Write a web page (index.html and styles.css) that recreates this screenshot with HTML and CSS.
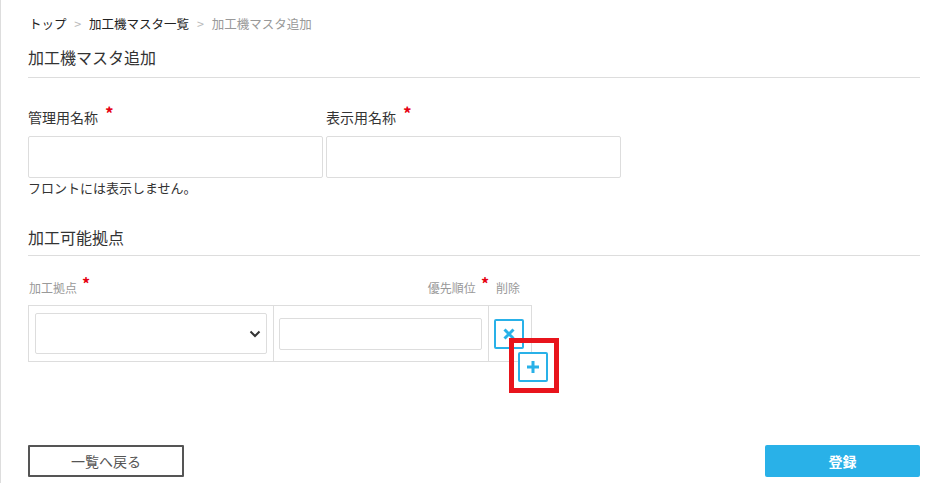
FILE: index.html
```html
<!DOCTYPE html>
<html lang="ja">
<head>
    <meta charset="UTF-8">
    <meta name="viewport" content="width=device-width, initial-scale=1.0">
    <title>加工機マスタ追加</title>
    <link rel="stylesheet" href="styles.css">
</head>
<body>
    <div class="page">
        <!-- パンくず -->
        <nav class="breadcrumb">
            <a href="#">トップ</a>
            <span class="sep">&gt;</span>
            <a href="#">加工機マスタ一覧</a>
            <span class="sep">&gt;</span>
            <span class="current">加工機マスタ追加</span>
        </nav>

        <h1 class="page-title">加工機マスタ追加</h1>

        <!-- 名称 -->
        <div class="name-fields">
            <div class="field">
                <label>管理用名称<span class="req">*</span></label>
                <input type="text" class="text-input">
            </div>
            <div class="field">
                <label>表示用名称<span class="req">*</span></label>
                <input type="text" class="text-input">
            </div>
        </div>
        <p class="help">フロントには表示しません。</p>

        <h2 class="section-title">加工可能拠点</h2>

        <!-- 拠点テーブル -->
        <div class="site-head">
            <div class="col-site">加工拠点<span class="req">*</span></div>
            <div class="col-order">優先順位<span class="req">*</span></div>
            <div class="col-del">削除</div>
        </div>
        <div class="site-row">
            <div class="col-site">
                <div class="select-wrap">
                    <select class="select"><option></option></select>
                    <svg class="chevron" width="12" height="8" viewBox="0 0 12 8"><path d="M1.5 1.5 6 6l4.5-4.5" fill="none" stroke="#333" stroke-width="2"/></svg>
                </div>
            </div>
            <div class="col-order">
                <input type="text" class="order-input">
            </div>
            <div class="col-del">
                <button type="button" class="icon-btn">
                    <svg width="12" height="12" viewBox="0 0 12 12"><path d="M1.5 1.5l9 9M10.5 1.5l-9 9" stroke="#29b1e8" stroke-width="3"/></svg>
                </button>
            </div>
        </div>
        <div class="add-wrap">
            <button type="button" class="icon-btn">
                <svg width="14" height="14" viewBox="0 0 14 14"><path d="M7 1v12M1 7h12" stroke="#29b1e8" stroke-width="3"/></svg>
            </button>
            <span class="highlight"></span>
        </div>

        <!-- ボタン -->
        <div class="actions">
            <button type="button" class="btn-back">一覧へ戻る</button>
            <button type="button" class="btn-submit">登録</button>
        </div>
    </div>
</body>
</html>
```

FILE: styles.css
```css
/* 基本 */
body {
    margin: 0;
    font-family: "Noto Sans CJK JP", "Noto Sans", sans-serif;
    color: #333;
    background: #fff;
}

.page {
    border-left: 1px solid #ddd;
    min-height: 483px;
    padding: 15px 15px 0 27px;
    box-sizing: border-box;
}

/* パンくず */
.breadcrumb {
    font-size: 12.5px;
    line-height: 18px;
    padding-left: 1px;
}

.breadcrumb a {
    color: #222;
    text-decoration: none;
}

.breadcrumb .sep {
    color: #bbb;
    margin: 0 5px;
}

.breadcrumb .current {
    color: #999;
}

/* 見出し */
.page-title,
.section-title {
    font-size: 16px;
    font-weight: normal;
    line-height: 24px;
    margin: 12px 0 0;
    padding-bottom: 8px;
    border-bottom: 1px solid #ddd;
}

.section-title {
    margin-top: 28px;
    padding-bottom: 6px;
}

/* 名称 */
.name-fields {
    display: flex;
    gap: 3px;
    margin-top: 29px;
}

.field label {
    display: block;
    font-size: 14px;
    line-height: 20px;
    margin-bottom: 9px;
}

.req {
    position: relative;
    top: -3px;
    color: #e60012;
    font-size: 17px;
    font-weight: bold;
    line-height: 0;
    margin-left: 7px;
}

.text-input {
    display: block;
    width: 295px;
    height: 42px;
    box-sizing: border-box;
    border: 1px solid #ddd;
    border-radius: 2px;
    margin: 0;
}

.help {
    font-size: 13px;
    line-height: 18px;
    margin: 1px 0 0;
}

/* 拠点テーブル */
.site-head,
.site-row {
    display: flex;
    width: 504px;
    box-sizing: border-box;
}

.site-head {
    margin-top: 23px;
    font-size: 12px;
    line-height: 18px;
    color: #999;
}

.site-head .col-site {
    width: 245px;
    padding-left: 1px;
}

.site-head .col-order {
    width: 215px;
    text-align: right;
    padding-right: 1px;
}

.site-head .col-del {
    padding-left: 6px;
}

.site-head .req {
    font-size: 16px;
    margin-left: 5px;
}

.site-row {
    margin-top: 8px;
    border: 1px solid #ddd;
}

.site-row > div {
    display: flex;
    align-items: center;
    box-sizing: border-box;
}

.site-row .col-site {
    width: 245px;
    padding: 7px 6px;
    border-right: 1px solid #ddd;
}

.site-row .col-order {
    width: 215px;
    padding: 0 6px 0 5px;
    border-right: 1px solid #ddd;
}

.site-row .col-del {
    flex: 1;
    padding-left: 5px;
}

.select-wrap {
    position: relative;
    width: 100%;
}

.select {
    display: block;
    width: 100%;
    height: 41px;
    appearance: none;
    background: #fff;
    border: 1px solid #ddd;
    border-radius: 2px;
    margin: 0;
}

.chevron {
    position: absolute;
    right: 6px;
    top: 17px;
    pointer-events: none;
}

.order-input {
    width: 100%;
    height: 32px;
    box-sizing: border-box;
    border: 1px solid #ddd;
    border-radius: 2px;
    margin: 0;
}

.icon-btn {
    width: 30px;
    height: 30px;
    padding: 0;
    border: 2px solid #29b1e8;
    border-radius: 2px;
    background: #fff;
    display: flex;
    align-items: center;
    justify-content: center;
    cursor: pointer;
}

/* 追加ボタン */
.add-wrap {
    position: relative;
    width: 30px;
    margin: -10px 0 0 490px;
}

.highlight {
    position: absolute;
    top: -14px;
    left: -9px;
    right: -11px;
    bottom: -11px;
    border: 5px solid #e8141c;
    pointer-events: none;
}

/* ボタン */
.actions {
    display: flex;
    justify-content: space-between;
    margin-top: 63px;
}

.btn-back,
.btn-submit {
    height: 32px;
    font-family: inherit;
    font-size: 14px;
    cursor: pointer;
}

.btn-back {
    width: 156px;
    background: #fff;
    border: 2px solid #555;
    color: #555;
    border-radius: 1px;
}

.btn-submit {
    width: 155px;
    background: #29b1e8;
    border: none;
    color: #fff;
    font-weight: bold;
    border-radius: 2px;
}
```
